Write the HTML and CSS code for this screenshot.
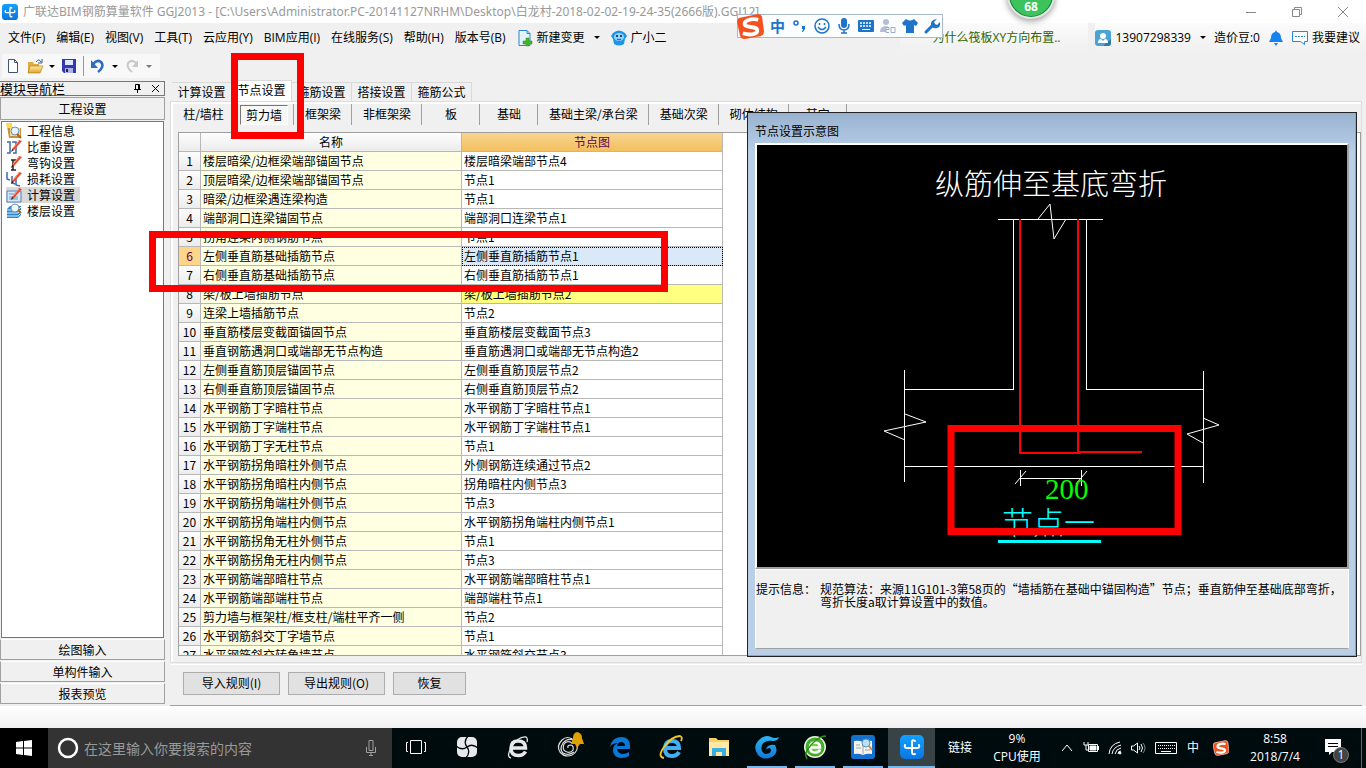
FILE: index.html
```html
<!DOCTYPE html>
<html lang="zh-CN">
<head>
<meta charset="utf-8">
<title>广联达BIM钢筋算量软件 GGJ2013</title>
<link rel="stylesheet" href="styles.css">
</head>
<body>
<svg class="defs" aria-hidden="true">
  <defs>
    <linearGradient id="blue" x1="0" y1="0" x2="0" y2="1"><stop offset="0" stop-color="#12a0ff"/><stop offset="1" stop-color="#0a76e0"/></linearGradient>
    <linearGradient id="sky" x1="0" y1="0" x2="0" y2="1"><stop offset="0" stop-color="#2bb6f6"/><stop offset="1" stop-color="#1478d4"/></linearGradient>
    <linearGradient id="gold" x1="0" y1="0" x2="0" y2="1"><stop offset="0" stop-color="#ffe9a0"/><stop offset="1" stop-color="#e0a52c"/></linearGradient>
    <radialGradient id="lime"><stop offset="0" stop-color="#8be04a"/><stop offset="1" stop-color="#35a321"/></radialGradient>
    <symbol id="app" viewBox="0 0 24 24"><rect width="24" height="24" rx="5" fill="url(#blue)"/><path d="M15 6q-3-2-3 1v10q0 3 3 2M5 10q-1 3 2 3h10q3 0 2-3" fill="none" stroke="#fff" stroke-width="2" stroke-linecap="round"/></symbol>
    <symbol id="sogou" viewBox="0 0 28 28"><path d="M3 5 22 1q3 0 4 3l2 15q0 4-4 5L8 27q-4 0-5-4L0 9q0-3 3-4z" fill="#f4511e"/><path d="M22 7C15 5 7 8 8 12s13 1 13 6-9 5-15 3" fill="none" stroke="#fff" stroke-width="4"/></symbol>
    <symbol id="pencil" viewBox="0 0 16 16"><path d="m6 10 7-9 3 1-8 9z" fill="#e8492e"/><path d="m7 9 6-7" stroke="#ff9b80"/><path d="m6 10 2 1-3 2z" fill="#222"/></symbol>
  </defs>
</svg>

<header class="titlebar">
  <svg class="i16"><use href="#app"/></svg>
  <span class="title">广联达BIM钢筋算量软件 GGJ2013 - [C:\Users\Administrator.PC-20141127NRHM\Desktop\白龙村-2018-02-02-19-24-35(2666版).GGJ12]</span>
  <div class="winbtns">
    <button aria-label="最小化"><svg viewBox="0 0 12 12"><path d="M1 6.500h10"/></svg></button>
    <button aria-label="还原"><svg viewBox="0 0 12 12"><path d="M1.500 3.500h7v7h-7zM3.500 3.500v-2h7v7h-2"/></svg></button>
    <button aria-label="关闭"><svg viewBox="0 0 12 12"><path d="m1 1 10 10M11 1 1 11"/></svg></button>
  </div>
</header>

<nav class="menubar">
  <button>文件(F)</button><button>编辑(E)</button><button>视图(V)</button><button>工具(T)</button><button>云应用(Y)</button><button>BIM应用(I)</button><button>在线服务(S)</button><button>帮助(H)</button><button>版本号(B)</button>
  <button class="withicon"><svg class="i16" viewBox="0 0 16 16"><path d="M2 .5h8l3 3v12H2z" fill="#e3f2fd" stroke="#2e86c8"/><path d="M10 .5v3h3" fill="none" stroke="#2e86c8"/><path d="M9 8h3v3h3v3h-3v2H9v-2H6v-3h3z" fill="#45b52c" stroke="#2c8a1b" stroke-width=".5"/></svg>新建变更<span class="caret"></span></button>
  <button class="withicon"><svg class="i16" viewBox="0 0 16 16"><path d="M2 3q6-5 12 0l2 3-2 3-1 5q-5 3-10 0L2 9 0 6z" fill="#1e96e6"/><ellipse cx="8" cy="7" rx="5" ry="4" fill="#8fd4fa"/><circle cx="6" cy="6" r="1" fill="#114"/><circle cx="10" cy="6" r="1" fill="#114"/><path d="M6 9q2 2 4 0" stroke="#124a80" fill="none"/></svg>广小二</button>
  <div class="notice"><a href="#faq">为什么筏板XY方向布置..</a></div>
  <div class="account">
    <button class="withicon"><svg class="i16" viewBox="0 0 16 16"><rect width="16" height="16" rx="3" fill="#4ba3d3"/><path d="m9 15 7-6v4q0 3-3 3H9z" fill="#34799f"/><circle cx="8" cy="6" r="3" fill="#fff"/><path d="M3 13q0-4 3-4l2 2 2-2q3 0 3 4z" fill="#fff"/></svg>13907298339<span class="caret"></span></button>
    <span class="beans">造价豆:0</span>
    <button aria-label="消息"><svg class="i16" viewBox="0 0 16 16"><path d="M8 0 9 2q4 1 4 6l2 4H1l2-4q0-5 4-6zM6 13h4l-2 3z" fill="#1683f0"/></svg></button>
    <button class="withicon"><svg class="i16" viewBox="0 0 16 16"><path d="M.5 1.500h15v10h-3v3l-4-3h-8z" fill="#fff" stroke="#2a86dc"/><path d="M3 6.500h2m1 0h2m1 0h2m1 0h1" stroke="#2a86dc"/></svg>我要建议</button>
  </div>
</nav>

<div class="toolbar">
  <div class="tools">
    <button aria-label="新建"><svg class="i16" viewBox="0 0 16 16"><path d="M3.500 1.500h6l3 3v10h-9z" fill="#fff" stroke="#3e5474"/><path d="M9.500 1.500v3h3" fill="none" stroke="#3e5474"/></svg></button>
    <button aria-label="打开"><svg class="i16" viewBox="0 0 16 16"><path d="M1 4h5l1 2h5v8H1z" fill="#e2ac3e"/><path d="m3 8h13l-3 7H1z" fill="url(#gold)" stroke="#a9791c" stroke-width=".6"/><path d="M9 4q3-4 5 0m1-3v4h-4" fill="none" stroke="#355a96"/></svg></button><span class="caret"></span>
    <button aria-label="保存"><svg class="i16" viewBox="0 0 16 16"><path d="M1 1h14v14H3l-2-2z" fill="#3439b0"/><path d="M4 2h8v5H4z" fill="#dfe8ff"/><path d="M4 10h8v5H4z" fill="#aab4e8"/><path d="M5 11h2v3H5z" fill="#223"/></svg></button>
    <span class="sep"></span>
    <button aria-label="撤销"><svg class="i16" viewBox="0 0 16 16"><path d="M3 6q4-5 8-2c3 3 1 7-3 10" fill="none" stroke="#2e6cc4" stroke-width="2.500"/><path d="M1 2v8h7z" fill="#2e6cc4"/></svg></button><span class="caret"></span>
    <button aria-label="重做"><svg class="i16" viewBox="0 0 16 16"><path d="M13 6q-4-5-8-2c-3 3-1 7 3 10" fill="none" stroke="#c9c9c9" stroke-width="2"/><path d="M14 2v7H8z" fill="#c9c9c9"/></svg></button><span class="caret dim"></span>
  </div>
</div>

<main class="work">
  <aside class="dock">
    <div class="dockhead"><span>模块导航栏</span>
      <button aria-label="固定"><svg viewBox="0 0 9 9"><path d="M2.500 5V.5h4V5M5.500 1v4M1 5.500h7M4.500 6v3" fill="none" stroke="#000"/></svg></button>
      <button aria-label="关闭"><svg viewBox="0 0 9 9"><path d="m1 1 7 7m0-7L1 8" fill="none" stroke="#000"/></svg></button>
    </div>
    <button class="group">工程设置</button>
    <ul class="navlist">
      <li><svg class="i16" viewBox="0 0 16 16"><path d="M1 3h5l1 2h8v10H3z" fill="#c89234"/><path d="M4 5h10v8H4z" fill="#f4dca0"/><circle cx="9" cy="8" r="4" fill="#e6f3ff" stroke="#6e8faf"/><path d="m11 11 4 4" stroke="#a46420" stroke-width="2"/><path d="M0 0h6v5H1z" fill="#ffd94a"/></svg><span>工程信息</span></li>
      <li><svg class="i16" viewBox="0 0 16 16"><path d="M1 3h3v11H1m5-11h4v11H7" fill="none" stroke="#3d6bb0" stroke-width="1.500"/><use href="#pencil"/></svg><span>比重设置</span></li>
      <li><svg class="i16" viewBox="0 0 16 16"><path d="M5 5h5M7 5v10m-2 0h5" stroke="#222" stroke-width="1.500"/><use href="#pencil"/></svg><span>弯钩设置</span></li>
      <li><svg class="i16" viewBox="0 0 16 16"><path d="M1 1v7l3 1M6 5v7l3 1m1-5v6l4 1" fill="none" stroke="#3d6bb0" stroke-width="1.500"/><use href="#pencil"/></svg><span>损耗设置</span></li>
      <li class="on"><svg class="i16" viewBox="0 0 16 16"><path d="M1 4h14v11H1z" fill="#d5e8fa" stroke="#4c82be"/><path d="M3 7h5m-5 3h9m-9 2h9" stroke="#6d97c4"/><use href="#pencil"/></svg><span>计算设置</span></li>
      <li><svg class="i16" viewBox="0 0 16 16"><path d="m1 6 3-3h11v9l-3 3H1z" fill="#2f86ca"/><path d="M1 7h11l3-3M1 10h11l3-3M1 13h11l3-3" fill="none" stroke="#d5efff"/><circle cx="9" cy="5" r="4" fill="#eef6fd" stroke="#8194a8"/><path d="m12 7 3 3" stroke="#b06a20" stroke-width="2"/></svg><span>楼层设置</span></li>
    </ul>
    <button class="group">绘图输入</button>
    <button class="group">单构件输入</button>
    <button class="group">报表预览</button>
  </aside>

  <section class="content">
    <div class="tabs"><button>计算设置</button><button class="on">节点设置</button><button>箍筋设置</button><button>搭接设置</button><button>箍筋公式</button></div>
    <div class="panel">
      <div class="subtabs"><button>柱/墙柱</button><button class="on"><span>剪力墙</span></button><button>框架梁</button><button>非框架梁</button><button>板</button><button>基础</button><button>基础主梁/承台梁</button><button>基础次梁</button><button>砌体结构</button><button>其它</button></div>
      <div class="gridwrap">
        <table class="grid">
          <colgroup><col class="cnum"><col><col></colgroup>
          <thead><tr><th></th><th>名称</th><th class="hot">节点图</th></tr></thead>
          <tbody>
            <tr><th>1</th><td>楼层暗梁/边框梁端部锚固节点</td><td>楼层暗梁端部节点4</td></tr>
            <tr><th>2</th><td>顶层暗梁/边框梁端部锚固节点</td><td>节点1</td></tr>
            <tr><th>3</th><td>暗梁/边框梁遇连梁构造</td><td>节点1</td></tr>
            <tr><th>4</th><td>端部洞口连梁锚固节点</td><td>端部洞口连梁节点1</td></tr>
            <tr><th>5</th><td>拐角连梁内侧钢筋节点</td><td>节点1</td></tr>
            <tr class="current"><th>6</th><td>左侧垂直筋基础插筋节点</td><td>左侧垂直筋插筋节点1</td></tr>
            <tr><th>7</th><td>右侧垂直筋基础插筋节点</td><td>右侧垂直筋插筋节点1</td></tr>
            <tr class="changed"><th>8</th><td>梁/板上墙插筋节点</td><td>梁/板上墙插筋节点2</td></tr>
            <tr><th>9</th><td>连梁上墙插筋节点</td><td>节点2</td></tr>
            <tr><th>10</th><td>垂直筋楼层变截面锚固节点</td><td>垂直筋楼层变截面节点3</td></tr>
            <tr><th>11</th><td>垂直钢筋遇洞口或端部无节点构造</td><td>垂直筋遇洞口或端部无节点构造2</td></tr>
            <tr><th>12</th><td>左侧垂直筋顶层锚固节点</td><td>左侧垂直筋顶层节点2</td></tr>
            <tr><th>13</th><td>右侧垂直筋顶层锚固节点</td><td>右侧垂直筋顶层节点2</td></tr>
            <tr><th>14</th><td>水平钢筋丁字暗柱节点</td><td>水平钢筋丁字暗柱节点1</td></tr>
            <tr><th>15</th><td>水平钢筋丁字端柱节点</td><td>水平钢筋丁字端柱节点1</td></tr>
            <tr><th>16</th><td>水平钢筋丁字无柱节点</td><td>节点1</td></tr>
            <tr><th>17</th><td>水平钢筋拐角暗柱外侧节点</td><td>外侧钢筋连续通过节点2</td></tr>
            <tr><th>18</th><td>水平钢筋拐角暗柱内侧节点</td><td>拐角暗柱内侧节点3</td></tr>
            <tr><th>19</th><td>水平钢筋拐角端柱外侧节点</td><td>节点3</td></tr>
            <tr><th>20</th><td>水平钢筋拐角端柱内侧节点</td><td>水平钢筋拐角端柱内侧节点1</td></tr>
            <tr><th>21</th><td>水平钢筋拐角无柱外侧节点</td><td>节点1</td></tr>
            <tr><th>22</th><td>水平钢筋拐角无柱内侧节点</td><td>节点3</td></tr>
            <tr><th>23</th><td>水平钢筋端部暗柱节点</td><td>水平钢筋端部暗柱节点1</td></tr>
            <tr><th>24</th><td>水平钢筋端部端柱节点</td><td>端部端柱节点1</td></tr>
            <tr><th>25</th><td>剪力墙与框架柱/框支柱/端柱平齐一侧</td><td>节点2</td></tr>
            <tr><th>26</th><td>水平钢筋斜交丁字墙节点</td><td>节点1</td></tr>
            <tr><th>27</th><td>水平钢筋斜交转角墙节点</td><td>水平钢筋斜交节点3</td></tr>
          </tbody>
        </table>
      </div>
    </div>
    <div class="actions"><button>导入规则(I)</button><button>导出规则(O)</button><button>恢复</button></div>
  </section>
</main>

<div class="statusgap"></div>

<footer class="taskbar">
  <button class="start" aria-label="开始"><svg class="i16" viewBox="0 0 16 16"><path d="m0 2 7-1v6.500H0zM8 1l8-1v7.500H8zM0 8.500h7V15l-7-1zM8 8.500h8V16l-8-1z" fill="#fff"/></svg></button>
  <div class="search">
    <svg class="ring" viewBox="0 0 22 22"><circle cx="11" cy="11" r="9" fill="none" stroke="#fff" stroke-width="2.500"/></svg>
    <input type="text" aria-label="搜索" placeholder="在这里输入你要搜索的内容">
    <svg class="mic" viewBox="0 0 12 16"><path d="M4 .5h4v10H4zM1.500 7v5.500h9V7M6 12.500V16M4 15.500h4" fill="none" stroke="#a0a0a0"/></svg>
  </div>
  <div class="apps">
    <button class="wide" aria-label="任务视图"><svg viewBox="0 0 24 24"><path d="M6.500 5.500h11v13h-11zM4 7.500H2.500v9H4m16-9h1.500v9H20" fill="none" stroke="#fff"/></svg></button>
    <button class="wide" aria-label="应用"><svg viewBox="0 0 24 24"><g fill="#e8e8e8"><circle cx="7" cy="7" r="5"/><circle cx="17" cy="7" r="5"/><circle cx="7" cy="17" r="5"/><circle cx="17" cy="17" r="5"/><path d="M7 2h5v20H7zM2 7h20v10H2zM12 2h5v20h-5z"/></g><path d="M12 12Q8 7 13 1M12 12q5-4 11 1M12 12q4 5-1 11M12 12q-5 4-11-1" stroke="#000b0e" stroke-width="1.300" fill="none"/></svg></button>
    <button class="wide" aria-label="浏览器"><svg viewBox="0 0 24 24"><path d="M5 13h14.500q0-7-7.500-7-7 0-7 7.500 0 7 7.500 7 5 0 7-4" fill="none" stroke="#e8e8e8" stroke-width="3.500"/><path d="M5 23q-5-1 0-10Q12 1 20 2q2 1 1 5" fill="none" stroke="#e8e8e8" stroke-width="1.300"/></svg></button>
    <button class="wide" aria-label="提醒"><svg viewBox="0 0 24 24"><path d="M17 5Q10 0 5 5-1 11 3 17q5 6 12 3 7-4 5-11M15 8q-5-3-8 1-2 5 1 7 5 3 8-1 1-4-2-5-4 0-3 3M17 5q-7-2-11 3-4 6 0 10 6 3 11-1" fill="none" stroke="#ddd" stroke-width="1.200"/><path d="M20-3q5 1 5 6l2 6H14l2-6q0-5 4-6z" fill="#e0a100"/><path d="M18 9h5l-3 4z" fill="#e0a100"/></svg></button>
    <button class="wide" aria-label="Edge"><svg viewBox="0 0 24 24"><path d="M2 12Q4 2 13 2q9 0 9 9v3H9q1 5 6 5 3 0 6-2v4q-3 2-8 2-8-1-8-8 0-5 5-7-6 0-8 4zm7-1h8q0-4-4-4-3 0-4 4z" fill="#0a78d6"/></svg></button>
    <button aria-label="Internet Explorer"><svg viewBox="0 0 24 24"><path d="M6 13h14q0-7-7-7t-7 7.500 7 7.500q5 0 7-4" fill="none" stroke="#45aef0" stroke-width="4"/><path d="M5 23q-7-1 0-11Q13 1 21 1q3 1 1 5" fill="none" stroke="#f5c62c" stroke-width="1.800"/></svg></button>
    <button aria-label="文件资源管理器"><svg viewBox="0 0 24 24"><path d="M2 3h7l2 2h11v16H2z" fill="#f7cf66"/><path d="M2 7h20v14H2z" fill="#ffe9a3"/><path d="M5 13h14v8h-4v-4H9v4H5z" fill="#35aee2"/></svg></button>
    <button class="run" aria-label="G浏览器"><svg viewBox="0 0 24 24"><path d="M24 2q-1 4-6 4-8-1-11 4-2 7 3 9 6 0 6-4l-1-2-4 1q2-5 9-4 4 8-3 12-9 4-14-2Q-3 12 4 5q6-6 12-3 4 2 8 0z" fill="url(#sky)"/></svg></button>
    <button class="run" aria-label="安全浏览器"><svg viewBox="0 0 24 24"><circle cx="12" cy="12" r="11" fill="#e9f7df"/><circle cx="12" cy="12" r="9.500" fill="url(#lime)"/><path d="M7 12.500h10q0-5-5-5t-5 5 5 5q4 0 5-3" fill="none" stroke="#fff" stroke-width="2.500"/><path d="M4 24q-4-5 4-14T23 1" fill="none" stroke="#2f8f1d" stroke-width="1.500"/></svg></button>
    <button class="run" aria-label="查看器"><svg viewBox="0 0 24 24"><rect width="24" height="24" rx="3" fill="#1472cf"/><path d="M3 6q5-1 9 1 4-2 9-1v13q-5-1-9 1-4-2-9-1z" fill="#f7f4ea"/><path d="M12 7v12M5 10h4m-4 3h5m4 2h5" stroke="#9aa7b5"/><circle cx="15" cy="8" r="4" fill="#b9e1fb" stroke="#5a8fbd"/><path d="m18 11 3 4" stroke="#d88a30" stroke-width="2"/></svg></button>
    <button class="run active" aria-label="广联达"><svg viewBox="0 0 24 24"><use href="#app"/></svg></button>
  </div>
  <div class="tray">
    <span class="links">链接</span>
    <span class="cpu">9%<br>CPU使用</span>
    <button aria-label="显示隐藏的图标"><svg class="i16" viewBox="0 0 16 16"><path d="m3 11 5-6 5 6"/></svg></button>
    <button aria-label="电源"><svg class="i16" viewBox="0 0 16 16"><path d="M5.500 4.500h9v7h-9zM15.500 6v4M1 2v3h4V2M3 5v5h2"/><path d="M7 6h6v4H7z" fill="#fff"/></svg></button>
    <button aria-label="网络"><svg class="i16" viewBox="0 0 16 16"><path d="M2 14Q3 4 13 2M5 14q1-7 9-9M8 14q1-5 6-6M11 14q0-3 3-3"/><circle cx="13" cy="13" r="1" fill="#fff"/></svg></button>
    <button aria-label="音量"><svg class="i16" viewBox="0 0 16 16"><path d="M.5 6v4h2l4 3V3l-4 3zM8 6q2 2 0 4m2-6q3 4 0 8"/><path d="M12 3q4 5 0 10" opacity=".5"/></svg></button>
    <button class="kb" aria-label="触摸键盘"><svg viewBox="0 0 24 14"><path d="M1.500 1.500h21v11h-21z"/><path d="M4 4.500h17M4 7.500h17" stroke-dasharray="1 1"/><path d="M7 10.500h10"/></svg></button>
    <button class="zh">中</button>
    <button class="sg" aria-label="搜狗输入法"><svg class="i16"><use href="#sogou"/></svg></button>
    <time class="clock">8:58<br>2018/7/4</time>
    <button class="note" aria-label="通知"><svg viewBox="0 0 24 24"><path d="M0 3h16v13H7l-3 3v-3H0z" fill="#fff" stroke="none"/><path d="M3 7.500h10m-10 3h10" stroke="#000"/></svg><span class="count">1</span></button>
    <span class="peek"></span>
  </div>
</footer>

<section class="dialog" aria-label="节点设置示意图">
  <h2>节点设置示意图</h2>
  <div class="stage">
    <svg viewBox="757 145 590 422" role="img" aria-label="纵筋伸至基底弯折">
      <g fill="none" stroke="#fff" shape-rendering="crispEdges">
        <path d="M998 219.500h105M1013.500 220v169.500H904.500M1086.500 220v169.500H1203.500M904.500 370v112M1203.500 371v112M904.500 466.500h299M1020.500 470v16M1081.500 470v16M1020 478.500h61"/>
      </g>
      <path d="m1038 219 12-15 4 35 12-20M905 414l21 8-42 9 21 9M1203 418l16 7-32 9 16 9M1015 484l11-13M1076 484l11-13" fill="none" stroke="#fff"/>
      <path d="M1020 219v234h61M1078 219v233h64" fill="none" stroke="#f00" stroke-width="2" shape-rendering="crispEdges"/>
      <text x="935" y="195" class="cad">纵筋伸至基底弯折</text>
      <text x="1045" y="499" class="dim200">200</text>
      <text x="1002" y="534" class="cad node">节点一</text>
      <path d="M998 541.500h103" stroke="#0ff" stroke-width="3"/>
      <path d="M948 428.500h233M948 531.500h233M951 425v110M1178 425v110" fill="none" stroke="#f00" stroke-width="7"/>
    </svg>
  </div>
  <div class="tip"><span>提示信息：</span><p>规范算法：来源11G101-3第58页的“墙插筋在基础中锚固构造”节点；垂直筋伸至基础底部弯折，<br>弯折长度a取计算设置中的数值。</p></div>
</section>

<div class="ime">
  <svg class="logo" viewBox="0 0 28 28"><use href="#sogou"/></svg>
  <b>中</b>
  <svg class="i16" viewBox="0 0 16 16"><circle cx="4" cy="5" r="2" fill="none" stroke="#1d74c8" stroke-width="1.500"/><path d="M10 8h3v3l-2 3h-1l1-3h-1z" fill="#1d74c8"/></svg>
  <svg class="i16" viewBox="0 0 16 16" fill="none" stroke="#1d74c8" stroke-width="1.500"><circle cx="8" cy="8" r="7"/><path d="M4 9q4 5 8 0M5.500 5v2m5-2v2"/></svg>
  <svg class="i16" viewBox="0 0 16 16"><rect x="5" width="6" height="10" rx="3" fill="#1d74c8"/><path d="M3 6q0 6 5 6t5-6M8 12v3M5 15h6" fill="none" stroke="#1d74c8" stroke-width="1.500"/></svg>
  <svg class="i16" viewBox="0 0 16 16"><rect y="2" width="16" height="12" rx="1" fill="#1d74c8"/><path d="M2 5h12M2 8h12" stroke="#fff" stroke-width="1.500" stroke-dasharray="2 1"/><path d="M4 11.500h8" stroke="#fff"/></svg>
  <svg class="i16" viewBox="0 0 16 16"><circle cx="6" cy="4" r="3" fill="#b4bfd4"/><path d="M0 14q0-6 6-6 2 0 2 1v5z" fill="#b4bfd4"/><path d="M6 9.500h3v2H6v3h3m2-5v5h4v-5h-4" stroke="#9ba9c4" fill="#fff"/></svg>
  <svg class="i16" viewBox="0 0 16 16"><path d="M4 1q4 3 8 0l4 4-2 3-2-1v8H4V7L2 8 0 5z" fill="#1d74c8"/></svg>
  <svg class="i16" viewBox="0 0 16 16"><path d="M9 7 2 14" stroke="#1d74c8" stroke-width="3" stroke-linecap="round"/><path d="m13 1-3 3 1 2 2 1 3-3q1 5-3 6-5 1-6-3-1-5 6-6z" fill="#1d74c8"/></svg>
</div>
<div class="ball">68</div>
<div class="mark mark-tab"></div>
<div class="mark mark-rows"></div>
</body>
</html>
```
FILE: styles.css
```css
* { box-sizing: border-box; }
html, body { height: 100%; }
body {
  margin: 0;
  display: flex;
  flex-direction: column;
  position: relative;
  overflow: hidden;
  background: #f0f0f0;
  color: #000;
  font: 12px/16px "Open Sans", "Noto Sans CJK SC", sans-serif;
}
button { margin: 0; padding: 0; border: 0; background: none; color: inherit; font: inherit; white-space: nowrap; }
svg { display: block; flex: none; overflow: visible; }
.defs { position: absolute; width: 0; height: 0; }
.i16 { width: 16px; height: 16px; }
.caret { width: 0; height: 0; border: 3px solid transparent; border-top-color: #000; border-bottom-width: 0; }
.caret.dim { border-top-color: #777; }

.titlebar { height: 23px; flex: none; display: flex; align-items: center; padding-left: 2px; gap: 5px; background: #fff; color: #999; }
.title { white-space: nowrap; font-family: "Noto Sans", "Noto Sans CJK SC", sans-serif; }
.winbtns { margin-left: auto; display: flex; }
.winbtns button { width: 46px; height: 20px; display: flex; justify-content: center; align-items: center; }
.winbtns svg { width: 12px; height: 12px; fill: none; stroke: #888; }

.menubar { height: 29px; flex: none; display: flex; align-items: center; gap: 11px; padding-left: 8px; white-space: nowrap; }
.withicon { display: flex; align-items: center; gap: 4px; }
.withicon .caret { margin-left: 5px; }
.notice, .account { height: 29px; display: flex; align-items: center; background: linear-gradient(#fbfbfb, #f0f0f0); }
.notice { margin-left: auto; width: 188px; padding-left: 32px; }
.notice a { color: #2f6500; text-decoration: none; }
.account { gap: 8px; padding-right: 6px; margin-left: -4px; }

.toolbar { height: 28px; flex: none; display: flex; align-items: center; padding-left: 2px; }
.tools { display: flex; align-items: center; gap: 6px; height: 24px; width: 158px; padding-left: 3px; background: #f8f8f8; }
.tools .sep { width: 1px; height: 20px; background: #999; }

.work { flex: 1; min-height: 0; display: flex; gap: 5px; font-family: "Noto Sans CJK SC", sans-serif; }
.dock { width: 165px; flex: none; display: flex; flex-direction: column; gap: 1px; padding: 1px 0 2px; }
.dockhead { height: 15px; display: flex; align-items: center; gap: 9px; padding-right: 4px; border: 1px solid #777; border-left: 0; font-size: 13px; line-height: 13px; }
.dockhead span { flex: 1; }
.dockhead svg { width: 9px; height: 9px; }
.group { height: 21px; flex: none; width: 100%; border: 1px solid #a0a0a0; border-top-color: #fff; background: #f0f0f0; }
.dockhead + .group { height: 23px; border-top-color: #a0a0a0; }
.navlist { flex: 1; margin: 0 1px; padding: 1px 4px; list-style: none; border: 1px solid #777; background: #fff; }
.navlist li { display: flex; align-items: center; height: 16px; width: 74px; gap: 5px; line-height: 16px; white-space: nowrap; }
.navlist li.on { background: #d9d9d9; }

.content { flex: 1; min-width: 0; display: flex; flex-direction: column; padding-right: 4px; }
.tabs { height: 21px; flex: none; display: flex; align-items: flex-end; padding-left: 2px; }
.tabs button { width: 60px; height: 19px; border: 1px solid #d9d9d9; border-bottom: 0; border-left: 0; }
.tabs .on { height: 21px; background: #fff; padding-bottom: 2px; }
.panel { flex: 1; min-height: 0; display: flex; flex-direction: column; border: 1px solid #dcdcdc; box-shadow: inset 0 2px #fff, inset 2px 0 #fff; padding: 2px 0 6px; }
.subtabs { height: 22px; flex: none; display: flex; align-items: flex-start; margin-bottom: 6px; }
.subtabs button { height: 21px; min-width: 58px; padding: 0 11px 2px; border-right: 1px solid #a0a0a0; }
.subtabs button:nth-child(n+3) { padding-right: 10px; }
.subtabs button:first-child { border-right: 0; min-width: 65px; }
.subtabs .on { padding: 0 5px 0 4px; }
.subtabs .on span { display: block; height: 20px; line-height: 18px; padding: 0 5px; border: 1px solid #fff; border-top-color: #777; border-left-color: #777; background: #f7f7f7; }
.gridwrap { flex: 1; min-height: 0; margin-left: 7px; overflow: hidden; border: 1px solid #a0a0a0; background: #fff; }
.grid { width: 544px; table-layout: fixed; border-collapse: separate; border-spacing: 0; line-height: 18px; }
.cnum { width: 22px; }
.grid th, .grid td { height: 19px; padding: 0 0 0 2px; border-right: 1px solid #b8b8b8; border-bottom: 1px solid #b8b8b8; white-space: nowrap; overflow: hidden; }
.grid th { padding: 0; font-weight: 400; text-align: center; background: linear-gradient(#fdfdfd, #ececec); }
.grid .hot { background: linear-gradient(#f8d592, #f2bf5e); color: #600050; }
.grid td:nth-child(2) { background: #ffffe1; }
.grid .current th { background: #ffd58a; color: #600050; }
.current td:last-child { background: #d9e9f8; outline: 1px dotted #000; outline-offset: -1px; }
.changed td:last-child { background: #ffff80; }
.actions { height: 42px; flex: none; display: flex; gap: 8px; align-items: flex-start; padding: 7px 13px; margin-top: 1px; border-top: 1px solid #fff; border-bottom: 1px solid #a0a0a0; }
.actions button { width: 97px; height: 23px; padding-bottom: 2px; border: 1px solid #adadad; background: #e1e1e1; }
.actions button:last-child { width: 73px; }

.statusgap { height: 22px; flex: none; background: linear-gradient(#fff, #f1f1f1); }

.taskbar { height: 40px; flex: none; display: flex; background: #000b0e; color: #fff; }
.taskbar button { display: flex; align-items: center; justify-content: center; }
.start { width: 48px; background: #000; }
.search { width: 344px; display: flex; align-items: center; gap: 5px; padding: 0 15px 0 9px; background: #333; }
.ring { width: 22px; height: 22px; }
.search input { flex: 1; min-width: 0; padding: 0; border: 0; outline: 0; background: none; color: #fff; font: 14px/20px "Noto Sans CJK SC", sans-serif; }
.search input::placeholder { color: #999; opacity: 1; }
.mic { width: 12px; height: 16px; }
.apps { display: flex; }
.apps button { width: 48px; border-bottom: 2px solid transparent; }
.apps .wide { margin-right: 3px; }
.apps svg { width: 24px; height: 24px; }
.apps .run { width: 40px; margin: 0 4px; border-color: #76b9ed; }
.apps .active { width: 47px; margin: 0 0 0 1px; background: #384347; }
.tray { flex: 1; display: flex; align-items: center; justify-content: flex-end; }
.tray svg { fill: none; stroke: #fff; }
.tray button { width: 24px; height: 40px; }
.links { width: 24px; margin-right: 18px; }
.cpu { width: 54px; margin-right: 11px; text-align: center; white-space: nowrap; }
.cpu, .clock { line-height: 18px; }
.tray .kb { width: 30px; }
.kb svg { width: 24px; height: 14px; }
.tray .sg { width: 32px; }
.clock { width: 76px; text-align: center; }
.tray .note { width: 48px; position: relative; }
.note svg { width: 24px; height: 24px; }
.count { position: absolute; left: 20px; top: 19px; width: 16px; height: 16px; border-radius: 8px; background: #444; border: 1px solid #777; line-height: 14px; }
.peek { width: 1px; height: 40px; margin-right: 4px; background: #666; }

.dialog { position: absolute; left: 747px; right: 9px; top: 112px; height: 545px; display: flex; flex-direction: column; padding: 0 7px 7px; border: 1px solid #222; box-shadow: inset -1px -1px #3cc5ee; background: linear-gradient(#98b2d0, #b9cfe8 40px); font-family: "Noto Sans CJK SC", sans-serif; }
.dialog h2 { margin: 0; height: 30px; flex: none; padding-top: 9px; font-size: 12px; font-weight: 400; line-height: 18px; }
.stage { flex: 1; min-height: 0; border: 2px solid #fff; border-right-color: #a0a0a0; border-bottom-color: #a0a0a0; background: #000; }
.stage svg { width: 100%; height: 100%; }
.cad { font: 300 29px "Noto Sans CJK SC", sans-serif; fill: #fff; }
.node { font-size: 31px; fill: #0ff; }
.dim200 { font: 29px "Liberation Serif", serif; fill: #0f0; }
.tip { height: 80px; flex: none; display: flex; padding: 12px 0 0; line-height: 13px; white-space: nowrap; background: #f0f0f0; border: 1px solid #fff; border-bottom-color: #a0a0a0; }
.tip span { width: 64px; flex: none; }
.tip p { margin: 0; }

.ime { position: absolute; left: 737px; top: 14px; width: 206px; height: 24px; display: flex; align-items: center; gap: 6px; border: 1px solid #a9b9cc; background: #fbfdff; }
.ime .logo { width: 27px; height: 27px; margin-left: -1px; }
.ime b { width: 16px; color: #1d74c8; font: 700 15px/20px "Noto Sans CJK SC", sans-serif; }
.ball { position: absolute; left: 1007px; top: -29px; width: 48px; height: 48px; padding-top: 26px; border: 2px solid #e4e4e4; border-radius: 24px; background: #3cc35c; box-shadow: inset 0 0 0 1px #15803a, 0 2px 6px #999; color: #fff; font-weight: 700; text-align: center; }
.mark { position: absolute; border: 7px solid #f00; }
.mark-tab { left: 231px; top: 53px; width: 73px; height: 86px; }
.mark-rows { left: 149px; top: 231px; width: 519px; height: 61px; }
```
